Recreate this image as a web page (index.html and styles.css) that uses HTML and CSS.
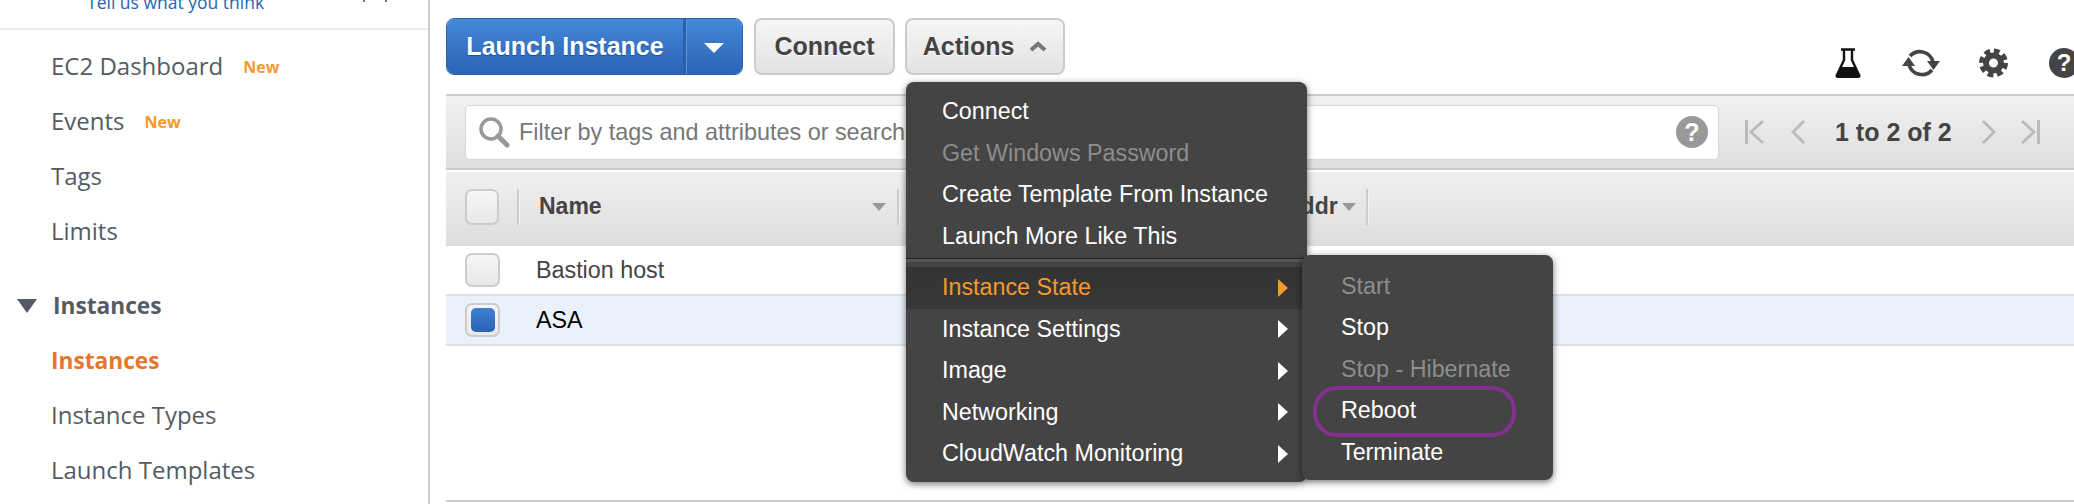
FILE: index.html
```html
<!DOCTYPE html>
<html lang="en">
<head>
<meta charset="UTF-8">
<meta name="viewport" content="width=device-width, initial-scale=1.0">
<title>EC2 Instances</title>
<link rel="stylesheet" href="styles.css">
</head>
<body>
<aside class="sidebar">
    <div class="feedback"><a class="feedback-link">Tell us what you think</a><span class="feedback-marks"></span></div>
    <nav class="nav">
        <a class="nav-item">EC2 Dashboard <span class="new">New</span></a>
        <a class="nav-item">Events <span class="new">New</span></a>
        <a class="nav-item">Tags</a>
        <a class="nav-item">Limits</a>
        <div class="nav-heading"><span class="nav-caret"></span>Instances</div>
        <a class="nav-item nav-active">Instances</a>
        <a class="nav-item">Instance Types</a>
        <a class="nav-item">Launch Templates</a>
    </nav>
</aside>

<main class="main">
    <div class="toolbar">
        <div class="btn-split">
            <button class="btn-launch">Launch Instance</button>
            <button class="btn-launch-caret"><span class="caret-down"></span></button>
        </div>
        <button class="btn">Connect</button>
        <button class="btn btn-actions">Actions
            <svg class="chevron" width="18" height="11" viewBox="0 0 18 11"><path d="M2 9L9 3l7 6" fill="none" stroke="#777" stroke-width="4"/></svg>
        </button>
        <div class="tools">
            <svg class="tool tool-flask" width="26" height="30" viewBox="0 0 26 30">
                <path d="M6 1.5H20M9 2V12L2.5 26M17 2V12L23.5 26" fill="none" stroke="#111" stroke-width="2.4"/>
                <path d="M6 19H20L25.5 27Q26 30 23 30H3Q0 30 .5 27Z" fill="#111"/>
            </svg>
            <svg class="tool tool-refresh" width="38" height="31" viewBox="0 0 38 31">
                <path d="M8 8A13.500 13.500 0 0 1 31 14M30 22A13.500 13.500 0 0 1 7 17" fill="none" stroke="#444" stroke-width="3.600"/>
                <path d="M25 13H38L31.500 22ZM0 18H13L6.500 9Z" fill="#444"/>
            </svg>
            <svg class="tool tool-gear" width="29" height="30" viewBox="0 0 29 30">
                <circle cx="14.500" cy="15" r="11.500" fill="none" stroke="#444" stroke-width="6" stroke-dasharray="5.500 3.530"/>
                <circle cx="14.500" cy="15" r="7.500" fill="none" stroke="#444" stroke-width="6"/>
            </svg>
            <span class="help-dark">?</span>
        </div>
    </div>

    <div class="filter-band">
        <div class="search">
            <svg class="search-icon" width="32" height="32" viewBox="0 0 32 32">
                <circle cx="13" cy="13" r="10" fill="none" stroke="#999" stroke-width="3.500"/>
                <path d="M20 20L29 29" stroke="#999" stroke-width="5" stroke-linecap="round"/>
            </svg>
            <span class="search-text">Filter by tags and attributes or search by keyword</span>
            <span class="help-light">?</span>
        </div>
        <div class="pager">
            <svg class="pager-first" width="19" height="26" viewBox="0 0 19 26"><path d="M1.500 1V25M18 2L6 13l12 11" fill="none" stroke="#bbb" stroke-width="3"/></svg>
            <svg class="pager-prev" width="14" height="26" viewBox="0 0 14 26"><path d="M13 2L2 13l11 11" fill="none" stroke="#bbb" stroke-width="3"/></svg>
            <span class="pager-text">1 to 2 of 2</span>
            <svg class="pager-next" width="14" height="26" viewBox="0 0 14 26"><path d="M1 2l11 11L1 24" fill="none" stroke="#bbb" stroke-width="3"/></svg>
            <svg class="pager-last" width="19" height="26" viewBox="0 0 19 26"><path d="M17.500 1V25M1 2l12 11L1 24" fill="none" stroke="#bbb" stroke-width="3"/></svg>
        </div>
    </div>

    <div class="table-head">
        <span class="check check-head"></span>
        <span class="col-sep col-sep-first"></span>
        <span class="col-name">Name</span>
        <span class="sort"></span>
        <span class="col-sep"></span>
        <span class="col-addr">Address</span>
        <span class="sort sort-addr"></span>
        <span class="col-sep"></span>
    </div>
    <div class="row">
        <span class="check"></span>
        <span class="row-name">Bastion host</span>
    </div>
    <div class="row row-selected">
        <span class="check check-on"></span>
        <span class="row-name">ASA</span>
    </div>
    <div class="table-end"></div>
</main>

<div class="menu">
    <div class="menu-item">Connect</div>
    <div class="menu-item menu-disabled">Get Windows Password</div>
    <div class="menu-item">Create Template From Instance</div>
    <div class="menu-item">Launch More Like This</div>
    <div class="menu-sep"></div>
    <div class="menu-item menu-open">Instance State<span class="arrow"></span></div>
    <div class="menu-item">Instance Settings<span class="arrow"></span></div>
    <div class="menu-item">Image<span class="arrow"></span></div>
    <div class="menu-item">Networking<span class="arrow"></span></div>
    <div class="menu-item">CloudWatch Monitoring<span class="arrow"></span></div>

    <div class="submenu">
        <div class="menu-item menu-disabled">Start</div>
        <div class="menu-item">Stop</div>
        <div class="menu-item menu-disabled">Stop - Hibernate</div>
        <div class="menu-item menu-circled">Reboot</div>
        <div class="menu-item">Terminate</div>
    </div>
</div>
</body>
</html>
```

FILE: styles.css
```css
html, body {
    height: 504px;
    overflow: hidden;
}
body {
    margin: 0;
    display: flex;
    background-color: #fff;
    font-family: "Liberation Sans", Arial, sans-serif;
    color: #444;
}

/* sidebar */
.sidebar {
    width: 428px;
    flex: none;
    border-right: 2px solid #ccc;
    font-family: "Open Sans", sans-serif;
    color: #545b64;
}
.feedback {
    position: relative;
    height: 28px;
    border-bottom: 2px solid #eaeaea;
    display: flex;
    flex-direction: column;
    justify-content: flex-end;
    overflow: hidden;
    padding-left: 87px;
}
.feedback-link {
    color: #2a62b4;
    font-size: 17.500px;
    line-height: 26px;
    flex: none;
    margin-bottom: 13px;
}
.feedback-marks {
    position: absolute;
    left: 363px;
    top: 0;
    width: 20px;
    height: 2px;
    border-left: 2px solid #777;
    border-right: 2px solid #777;
}
.nav {
    padding-top: 8px;
}
.nav-item {
    height: 55px;
    display: flex;
    align-items: center;
    padding-left: 51px;
    font-size: 24px;
}
.new {
    color: #f7992e;
    font-size: 16px;
    font-weight: 700;
    margin-left: 20px;
    margin-top: 3px;
}
.nav-heading {
    height: 55px;
    margin-top: 20px;
    display: flex;
    align-items: center;
    padding-left: 17px;
    font-size: 22.700px;
    font-weight: 700;
}
.nav-heading ~ .nav-item {
    height: 54.500px;
}
.nav-caret {
    width: 0;
    height: 0;
    margin-right: 16px;
    border-left: 10px solid transparent;
    border-right: 10px solid transparent;
    border-top: 14px solid #545b64;
}
.nav-item.nav-active {
    color: #e4772f;
    font-size: 22.700px;
    font-weight: 700;
}

/* toolbar */
.main {
    flex: 1;
    min-width: 0;
    margin-left: 16px;
}
.toolbar {
    height: 57px;
    padding: 18px 0 19px;
    display: flex;
    gap: 10px;
}
.btn-split {
    display: flex;
    flex: none;
    margin-right: 1px;
    border: 1px solid #2c60a8;
    border-radius: 8px;
    overflow: hidden;
}
.btn-launch, .btn-launch-caret {
    border: none;
    background: linear-gradient(#4488d8, #2b63b5);
    color: #fff;
    font: bold 25px "Liberation Sans", Arial, sans-serif;
    text-shadow: 0 1px 1px #1c4a8c;
}
.btn-launch {
    width: 236px;
    padding: 0;
}
.btn-launch-caret {
    width: 59px;
    border-left: 3px solid #2c60a8;
    box-shadow: inset 1px 0 0 #5a95dc;
}
.caret-down {
    display: block;
    width: 0;
    height: 0;
    margin: 3px auto 0;
    border-left: 10px solid transparent;
    border-right: 10px solid transparent;
    border-top: 10px solid #fff;
}
.btn {
    height: 57px;
    width: 141px;
    flex: none;
    border: 2px solid #ccc;
    border-radius: 8px;
    background: linear-gradient(#f6f6f6, #e2e2e2);
    color: #444;
    font: bold 25px "Liberation Sans", Arial, sans-serif;
    text-shadow: 0 1px 0 #fff;
    padding: 0;
}
.btn-actions {
    width: 160px;
}
.chevron {
    margin-left: 8px;
    vertical-align: 3px;
}
.tools {
    margin-left: 760px;
    margin-top: 30px;
    display: flex;
    flex: none;
}
.tool {
    flex: none;
}
.tool-refresh {
    margin-left: 41px;
}
.tool-gear {
    margin-left: 39px;
}
.help-dark {
    flex: none;
    width: 30px;
    height: 30px;
    margin-left: 41px;
    border-radius: 50%;
    background-color: #444;
    color: #fff;
    font-size: 24px;
    font-weight: 700;
    line-height: 30px;
    text-align: center;
}

/* filter band */
.filter-band {
    height: 72px;
    border-top: 2px solid #ccc;
    border-bottom: 2px solid #ccc;
    margin-bottom: 2px;
    background: linear-gradient(#f1f1f1, #dedede);
    display: flex;
    align-items: center;
    padding-left: 19px;
}
.search {
    width: 1252px;
    height: 53px;
    flex: none;
    display: flex;
    align-items: center;
    border: 1px solid #d8d8d8;
    border-radius: 5px;
    background-color: #fff;
}
.search-icon {
    margin-left: 12px;
    flex: none;
}
.search-text {
    margin-left: 9px;
    color: #777;
    font-size: 23.400px;
}
.help-light {
    margin-left: auto;
    margin-right: 10px;
    width: 32px;
    height: 32px;
    border-radius: 50%;
    background-color: #999;
    color: #fff;
    font-size: 25px;
    font-weight: 700;
    line-height: 32px;
    text-align: center;
}
.pager {
    display: flex;
    align-items: center;
    flex: none;
    margin-left: 26px;
}
.pager-prev {
    margin-left: 27px;
}
.pager-text {
    width: 117px;
    margin: 0 30px;
    font-size: 25px;
    font-weight: 700;
    white-space: nowrap;
}
.pager-last {
    margin-left: 25px;
}

/* table */
.table-head {
    height: 69px;
    padding: 0 0 5px 19px;
    background: linear-gradient(#f0f0f0, #dddddd);
    display: flex;
    align-items: center;
}
.check {
    width: 31px;
    height: 30px;
    flex: none;
    border: 2px solid #ccc;
    border-radius: 7px;
    background: linear-gradient(#f6f6f6, #e8e8e8);
    display: flex;
    align-items: center;
    justify-content: center;
}
.check-head {
    width: 30px;
    height: 32px;
}
.col-sep {
    width: 2px;
    height: 36px;
    flex: none;
    background-color: #ccc;
    box-shadow: 1px 0 0 #f5f5f5;
}
.col-sep-first {
    margin-left: 18px;
}
.col-name {
    width: 333px;
    margin-left: 20px;
    font-size: 23px;
    font-weight: 700;
}
.sort {
    width: 0;
    height: 0;
    flex: none;
    border-left: 7px solid transparent;
    border-right: 7px solid transparent;
    border-top: 8px solid #999;
    margin-right: 11px;
}
.col-addr {
    width: 54px;
    margin-left: 385px;
    overflow: hidden;
    font-size: 23px;
    font-weight: 700;
}
.sort-addr {
    margin-left: 4px;
    margin-right: 10px;
}
.row {
    height: 48px;
    border-bottom: 2px solid #e0e0e0;
    display: flex;
    align-items: center;
    padding-left: 19px;
}
.row-name {
    margin-left: 36px;
    font-size: 23.300px;
}
.row-selected {
    background-color: #eaf1fb;
}
.row-selected .row-name {
    color: #000;
}
.check-on::after {
    content: "";
    width: 24px;
    height: 24px;
    border-radius: 5px;
    background: linear-gradient(#3f80d2, #2a62b4);
}
.table-end {
    height: 2px;
    margin-top: 154px;
    background-color: #ccc;
}

/* actions menu */
.menu, .submenu {
    position: absolute;
    background-color: #444;
    border-radius: 8px;
    box-shadow: 0 2px 7px rgba(0, 0, 0, .55);
    color: #fff;
    font-size: 23.300px;
}
.menu {
    left: 906px;
    top: 82px;
    width: 401px;
    height: 400px;
    padding-top: 9px;
    box-sizing: border-box;
}
.submenu {
    left: 396px;
    top: 173px;
    width: 251px;
    height: 225px;
    padding-top: 10.500px;
    box-sizing: border-box;
}
.menu-item {
    height: 41.500px;
    display: flex;
    align-items: center;
    justify-content: space-between;
    padding: 0 19px 0 36px;
}
.submenu .menu-item {
    padding-left: 39px;
}
.menu-disabled {
    color: #8d8d8d;
}
.menu-sep {
    height: 3px;
    margin-top: 1px;
    margin-bottom: 5px;
    background-color: #555;
    border-top: 1px solid #222;
}
.menu-open {
    background: linear-gradient(#333, #383838);
    color: #f7992e;
}
.menu-open .arrow {
    border-left-color: #f7992e;
}
.arrow {
    width: 0;
    height: 0;
    border-top: 9px solid transparent;
    border-bottom: 9px solid transparent;
    border-left: 10px solid #fff;
}
.menu-circled {
    position: relative;
}
.menu-circled::after {
    content: "";
    position: absolute;
    left: 11px;
    top: -4px;
    width: 195px;
    height: 43px;
    border: 4px solid #84318f;
    border-radius: 24px;
}
```
